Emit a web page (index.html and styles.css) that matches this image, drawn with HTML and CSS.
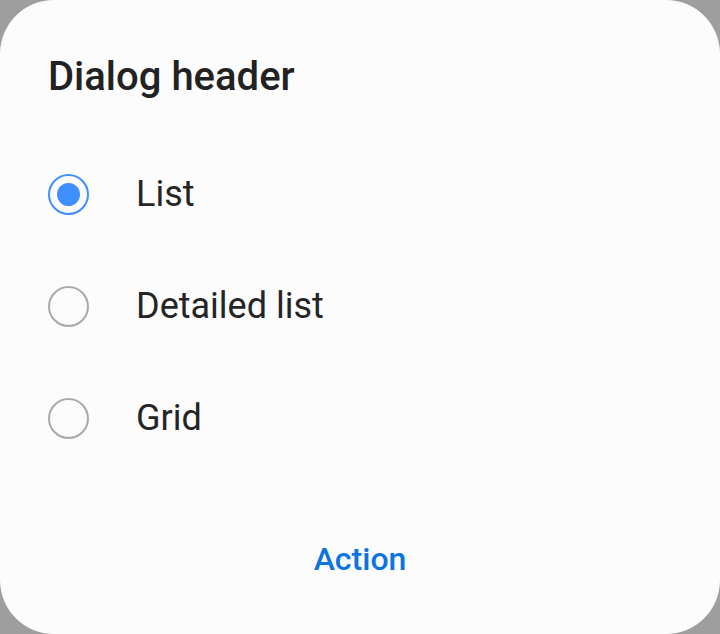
FILE: index.html
```html
<!DOCTYPE html>
<html lang="en">
<head>
<meta charset="utf-8">
<title>Dialog</title>
<link rel="stylesheet" href="styles.css">
</head>
<body>
<div class="dialog">
  <h1 class="header">Dialog header</h1>
  <ul class="options">
    <li class="option"><span class="radio checked"></span><span class="label">List</span></li>
    <li class="option"><span class="radio"></span><span class="label">Detailed list</span></li>
    <li class="option"><span class="radio"></span><span class="label">Grid</span></li>
  </ul>
  <div class="actions"><button class="action">Action</button></div>
</div>
</body>
</html>
```

FILE: styles.css
```css
html, body {
  margin: 0;
  padding: 0;
  background: #9e9e9e;
}
body {
  width: 720px;
  height: 634px;
  overflow: hidden;
  font-family: Roboto, "Noto Sans", sans-serif;
}
.dialog {
  box-sizing: border-box;
  width: 720px;
  height: 634px;
  background: #fcfcfc;
  border-radius: 54px;
  padding: 53px 0 0 48px;
}
.header {
  margin: 0;
  font-size: 40px;
  line-height: 48px;
  font-weight: 500;
  color: #222222;
}
.options {
  list-style: none;
  margin: 37px 0 0 0;
  padding: 0;
}
.option {
  height: 112px;
  display: flex;
  align-items: center;
}
.radio {
  box-sizing: border-box;
  width: 41px;
  height: 41px;
  border-radius: 50%;
  border: 2px solid #a9a9a9;
  display: flex;
  align-items: center;
  justify-content: center;
  flex: none;
}
.radio.checked {
  border-color: #3f8fff;
}
.radio.checked::after {
  content: "";
  width: 23px;
  height: 23px;
  border-radius: 50%;
  background: #3f8fff;
}
.label {
  margin-left: 47px;
  font-size: 36px;
  line-height: 44px;
  color: #252525;
}
.actions {
  margin-top: 65px;
  margin-left: -48px;
  display: flex;
  justify-content: center;
}
.action {
  border: 0;
  background: none;
  padding: 0;
  font-family: Roboto, "Noto Sans", sans-serif;
  font-size: 32px;
  line-height: 40px;
  font-weight: 500;
  color: #0b74de;
}
```
